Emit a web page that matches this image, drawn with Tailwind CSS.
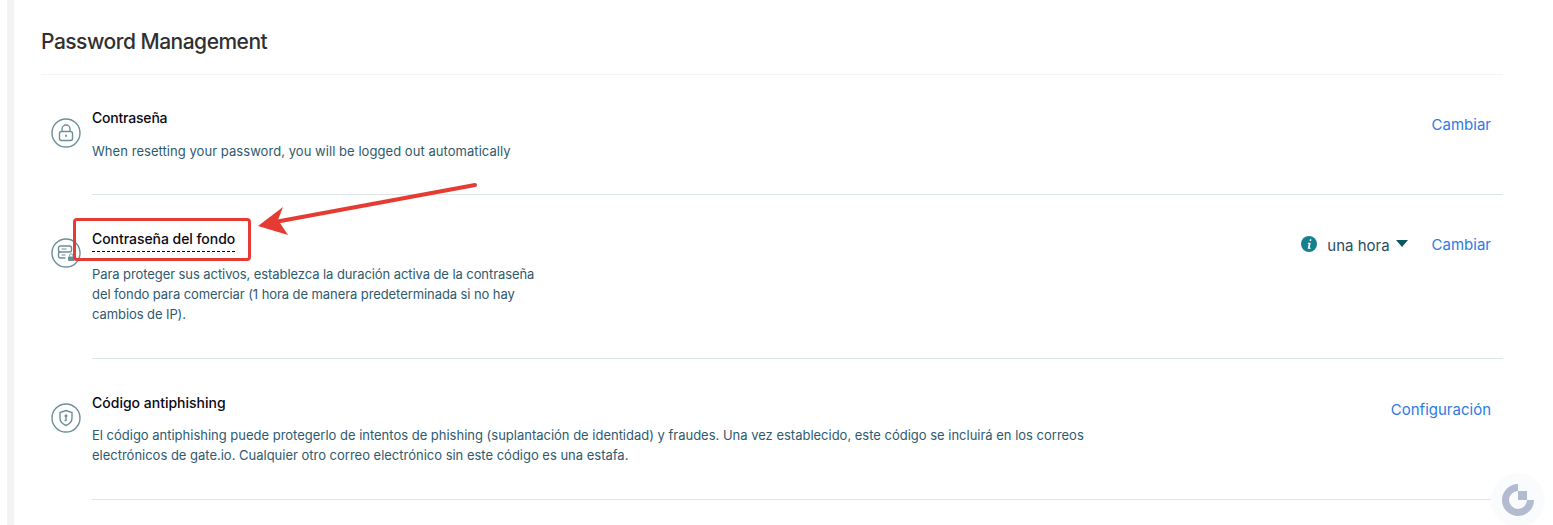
<!DOCTYPE html>
<html lang="en">
<head>
    <meta charset="UTF-8">
    <meta name="viewport" content="width=device-width, initial-scale=1.0">
    <title>Password Management</title>
    <script src="https://cdn.jsdelivr.net/npm/@tailwindcss/browser@4"></script>
</head>
<body class="bg-white h-[525px] overflow-hidden relative font-['Inter',sans-serif]">
    <div class="flex h-[525px]">
        <div class="w-[7px] shrink-0"></div>
        <div class="w-[7px] shrink-0 bg-[#f3f3f3]"></div>
        <main class="w-[1462px] ml-[27px]">
            <h1 class="h-[75px] pt-[27px] text-[21px] tracking-[-0.5px] leading-[30px] font-medium text-[#303030] border-b border-[#f2f3f4]">Password Management</h1>

            <!-- password -->
            <section class="flex pt-[33px]">
                <div class="w-[51px] shrink-0 pl-[10px] pt-[10px]">
                    <svg class="w-[30px] h-[30px]" viewBox="0 0 30 30" fill="none" stroke="#6d8f99" stroke-width="1.4">
                        <circle cx="15" cy="15" r="14"/>
                        <rect x="8.500" y="13.500" width="13" height="9" rx="2"/>
                        <path d="M11 13.500v-2.500a4 4 0 0 1 8 0v2.500"/>
                        <path d="M15 16.800v2" stroke-width="1.800"/>
                    </svg>
                </div>
                <div class="flex-1 h-[87px] border-b border-[#dde5e7] flex justify-between">
                    <div>
                        <h2 class="text-[14px] tracking-[-0.2px] leading-5 font-medium text-[#0a0a14]">Contraseña</h2>
                        <p class="mt-[13px] text-[13px] tracking-[0.05px] leading-5 text-[#2f5a6e]">When resetting your password, you will be logged out automatically</p>
                    </div>
                    <a class="mr-[12px] mt-[7px] text-[15px] leading-5 text-[#2f7ae5]">Cambiar</a>
                </div>
            </section>

            <!-- fund password -->
            <section class="flex pt-[34px]">
                <div class="w-[51px] shrink-0 pl-[10px] pt-[9px]">
                    <svg class="w-[30px] h-[30px]" viewBox="0 0 30 30" fill="none" stroke="#6d8f99" stroke-width="1.4">
                        <circle cx="15" cy="15" r="14"/>
                        <path d="M9.500 8h9a2 2 0 0 1 2 2v2a2 2 0 0 1-2 2h-9a2 2 0 0 1-2-2v-2a2 2 0 0 1 2-2z"/>
                        <path d="M9.500 14a2 2 0 0 0-2 2v2a2 2 0 0 0 2 2h5"/>
                        <path d="M10.500 11h5M10.500 17h4" stroke-width="1.100"/>
                        <rect x="17" y="18.500" width="6.500" height="4.500" rx="0.800" fill="#6d8f99" stroke="none"/>
                        <path d="M18.500 18.500v-1a1.700 1.700 0 0 1 3.400 0v1" stroke-width="0.900"/>
                    </svg>
                </div>
                <div class="flex-1 h-[130px] border-b border-[#dde5e7] flex justify-between">
                    <div>
                        <h2 class="w-fit text-[14px] tracking-[-0.05px] leading-5 font-medium text-[#0a0a14] border-b border-dashed border-black pb-[2px]">Contraseña del fondo</h2>
                        <p class="w-[460px] mt-[12px] text-[13px] tracking-[-0.08px] leading-5 text-[#2f5a6e]">Para proteger sus activos, establezca la duración activa de la contraseña del fondo para comerciar (1 hora de manera predeterminada si no hay cambios de IP).</p>
                    </div>
                    <div class="flex items-start mr-[12px] mt-[6px]">
                        <svg class="w-4 h-4 mt-[1px]" viewBox="0 0 16 16">
                            <circle cx="8" cy="8" r="8" fill="#17808f"/>
                            <path d="M8.900 3.300h1.500l-.3 1.600H8.600zM7 6.700h2.700l-1 5h1v1H6.700l1-5h-1z" fill="#fff"/>
                        </svg>
                        <span class="ml-[10px] text-[15px] leading-5 mt-[1px] text-[#2c4c5c]">una hora</span>
                        <svg class="w-[12px] h-[8px] ml-[6px] mt-[5px]" viewBox="0 0 12 8"><path d="M0 0h12L6 7z" fill="#0e5562"/></svg>
                        <a class="ml-[24px] text-[15px] leading-5 text-[#2f7ae5]">Cambiar</a>
                    </div>
                </div>
            </section>

            <!-- antiphishing -->
            <section class="flex pt-[34px]">
                <div class="w-[51px] shrink-0 pl-[10px] pt-[10px]">
                    <svg class="w-[30px] h-[30px]" viewBox="0 0 30 30" fill="none" stroke="#6d8f99" stroke-width="1.4">
                        <circle cx="15" cy="15" r="14"/>
                        <path d="M15 7.500l6 2v5.500c0 3.500-2.500 6-6 7.500-3.500-1.500-6-4-6-7.500v-5.500z"/>
                        <circle cx="15" cy="12.800" r="0.800" fill="#6d8f99"/>
                        <path d="M15 13v4.500h-1.500"/>
                    </svg>
                </div>
                <div class="flex-1 h-[107px] border-b border-[#dde5e7] flex justify-between">
                    <div>
                        <h2 class="text-[14px] leading-5 font-medium text-[#0a0a14]">Código antiphishing</h2>
                        <p class="w-[1040px] mt-[12px] text-[13px] tracking-[-0.01px] leading-5 text-[#2f5a6e]">El código antiphishing puede protegerlo de intentos de phishing (suplantación de identidad) y fraudes. Una vez establecido, este código se incluirá en los correos electrónicos de gate.io. Cualquier otro correo electrónico sin este código es una estafa.</p>
                    </div>
                    <a class="mr-[12px] mt-[7px] text-[15px] leading-5 text-[#2f7ae5]">Configuración</a>
                </div>
            </section>
        </main>
    </div>

    <!-- annotation over the page -->
    <div class="absolute left-[73px] top-[218px] w-[178px] h-[43px] border-[3px] border-[#e53b32] rounded-[4px]"></div>
    <svg class="absolute left-0 top-0 pointer-events-none" width="1553" height="525">
        <path d="M475 185L275 222" stroke="#e53b32" stroke-width="4" stroke-linecap="round"/>
        <path d="M258 226L283 207L278 220L288 235z" fill="#e53b32"/>
    </svg>

    <!-- floating widget -->
    <div class="absolute left-[1491px] top-[473px] w-[54px] h-[54px] rounded-full bg-[#fafbfd] flex items-center justify-center">
        <svg class="w-[32px] h-[32px]" viewBox="0 0 32 32">
            <path d="M16 0v7a9 9 0 1 0 9 9h7a16 16 0 1 1-16-16z" fill="#b3bbd1"/>
            <rect x="16" y="7" width="9" height="9" fill="#b3bbd1"/>
        </svg>
    </div>
</body>
</html>
